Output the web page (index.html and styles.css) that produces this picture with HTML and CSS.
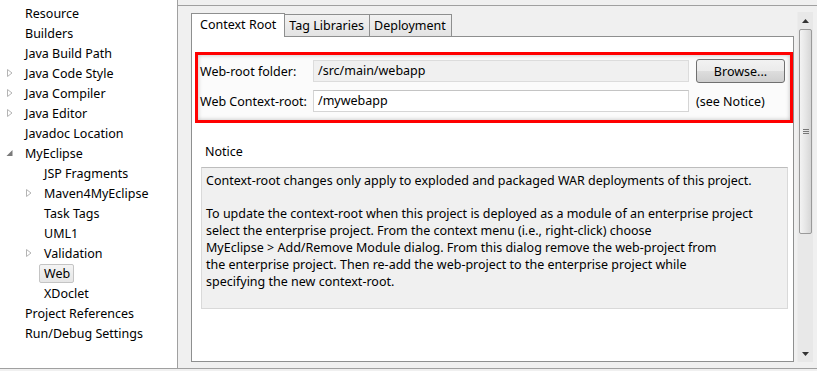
FILE: index.html
```html
<!DOCTYPE html>
<html lang="en">
<head>
  <meta charset="UTF-8" />
  <title>Properties - Web</title>
  <link rel="stylesheet" href="styles.css">
</head>
<body>
  <div class="window">
    <ul class="tree">
      <li class="row"><span class="twisty"></span><span class="label">Resource</span></li>
      <li class="row"><span class="twisty"></span><span class="label">Builders</span></li>
      <li class="row"><span class="twisty"></span><span class="label">Java Build Path</span></li>
      <li class="row"><span class="twisty"><svg width="8" height="10" viewBox="0 0 8 10"><path d="M1.5 1.5 L6 5 L1.5 8.5 Z" fill="#fff" stroke="#b4b4b4"/></svg></span><span class="label">Java Code Style</span></li>
      <li class="row"><span class="twisty"><svg width="8" height="10" viewBox="0 0 8 10"><path d="M1.5 1.5 L6 5 L1.5 8.5 Z" fill="#fff" stroke="#b4b4b4"/></svg></span><span class="label">Java Compiler</span></li>
      <li class="row"><span class="twisty"><svg width="8" height="10" viewBox="0 0 8 10"><path d="M1.5 1.5 L6 5 L1.5 8.5 Z" fill="#fff" stroke="#b4b4b4"/></svg></span><span class="label">Java Editor</span></li>
      <li class="row"><span class="twisty"></span><span class="label">Javadoc Location</span></li>
      <li class="row"><span class="twisty"><svg width="8" height="10" viewBox="0 0 8 10"><path d="M6.5 2 L6.5 8 L0.5 8 Z" fill="#7a7a7a"/></svg></span><span class="label">MyEclipse</span></li>
      <li class="row child"><span class="twisty"></span><span class="label">JSP Fragments</span></li>
      <li class="row child"><span class="twisty"><svg width="8" height="10" viewBox="0 0 8 10"><path d="M1.5 1.5 L6 5 L1.5 8.5 Z" fill="#fff" stroke="#b4b4b4"/></svg></span><span class="label">Maven4MyEclipse</span></li>
      <li class="row child"><span class="twisty"></span><span class="label">Task Tags</span></li>
      <li class="row child"><span class="twisty"></span><span class="label">UML1</span></li>
      <li class="row child"><span class="twisty"><svg width="8" height="10" viewBox="0 0 8 10"><path d="M1.5 1.5 L6 5 L1.5 8.5 Z" fill="#fff" stroke="#b4b4b4"/></svg></span><span class="label">Validation</span></li>
      <li class="row child"><span class="twisty"></span><span class="label selected">Web</span></li>
      <li class="row child"><span class="twisty"></span><span class="label">XDoclet</span></li>
      <li class="row"><span class="twisty"></span><span class="label">Project References</span></li>
      <li class="row"><span class="twisty"></span><span class="label">Run/Debug Settings</span></li>
    </ul>

    <div class="main">
      <div class="page">
        <div class="folder">
          <div class="tabs">
            <div class="tab active">Context Root</div>
            <div class="tab">Tag Libraries</div>
            <div class="tab">Deployment</div>
          </div>
          <div class="panel">
            <div class="highlight">
              <div class="form-grid">
                <label>Web-root folder:</label>
                <div class="field readonly">/src/main/webapp</div>
                <button type="button" class="btn">Browse...</button>
                <label>Web Context-root:</label>
                <div class="field">/mywebapp</div>
                <span class="hint">(see Notice)</span>
              </div>
            </div>

            <div class="notice-title">Notice</div>
            <div class="notice-box">
              <p>Context-root changes only apply to exploded and packaged WAR deployments of this project.</p>
              <p>To update the context-root when this project is deployed as a module of an enterprise project<br>
select the enterprise project. From the context menu (i.e., right-click) choose<br>
MyEclipse &gt; Add/Remove Module dialog. From this dialog remove the web-project from<br>
the enterprise project. Then re-add the web-project to the enterprise project while<br>
specifying the new context-root.</p>
            </div>
          </div>
        </div>

        <div class="scrollbar">
          <div class="arrow up"><svg width="7" height="4" viewBox="0 0 7 4"><path d="M3.5 0 L7 4 L0 4 Z" fill="#333"/></svg></div>
          <div class="thumb"><span class="grip"></span></div>
          <div class="track"></div>
          <div class="arrow down"><svg width="7" height="4" viewBox="0 0 7 4"><path d="M0 0 L7 0 L3.5 4 Z" fill="#333"/></svg></div>
        </div>
      </div>
    </div>
  </div>
</body>
</html>
```

FILE: styles.css
```css
* {
  margin: 0;
  padding: 0;
  box-sizing: border-box;
}
body {
  font-family: 'Noto Sans', 'Open Sans', sans-serif;
  font-size: 12.5px;
  color: #000;
  background: #f0f0f0;
}
.window {
  display: flex;
  height: 369px;
  border-bottom: 1px solid #a0a0a0;
}

/* left tree */
.tree {
  list-style: none;
  width: 178px;
  background: #fff;
  border-right: 1px solid #a0a0a0;
  padding-top: 3px;
}
.row {
  display: flex;
  align-items: center;
  height: 20px;
  padding-left: 6px;
  white-space: nowrap;
}
.row.child {
  padding-left: 25px;
}
.twisty {
  width: 19px;
  display: flex;
  align-items: center;
}
.label.selected {
  margin-left: -5px;
  padding: 0 3px 0 4px;
  line-height: 17px;
  border: 1px solid #c4c4c4;
  border-radius: 2px;
  background: linear-gradient(#f4f4f4, #e6e6e6);
}

/* right side */
.main {
  flex: 1;
  padding-top: 5px;
}
.page {
  display: flex;
  border-top: 1px solid #a0a0a0;
  padding: 6px 4px 0 13px;
  height: 357px;
}
.folder {
  width: 603px;
  display: flex;
  flex-direction: column;
}
.tabs {
  display: flex;
  align-items: flex-end;
  height: 24px;
}
.tab {
  height: 22px;
  padding: 0 5px 0 4px;
  line-height: 21px;
  background: linear-gradient(#f2f2f2, #e3e3e3);
  border: 1px solid #8e8f8f;
  border-bottom: none;
  margin-left: -1px;
  white-space: nowrap;
}
.tab.active {
  height: 24px;
  padding: 0 8px;
  line-height: 21px;
  background: #fff;
  margin-left: 0;
  position: relative;
  z-index: 1;
  margin-bottom: -1px;
}
.panel {
  flex: 1;
  background: #fff;
  border: 1px solid #8e8f8f;
  padding: 15px 0 0 3px;
}
.highlight {
  width: 598px;
  border: 3px solid #ff0000;
  box-shadow: inset 0 0 4px rgba(0,0,0,0.25);
  background: #fbfbfb;
}
.form-grid {
  display: grid;
  grid-template-columns: 106px 376px 89px;
  grid-template-rows: 24px 22px;
  column-gap: 7px;
  row-gap: 7px;
  align-items: center;
  padding: 4px 0 8px 2px;
  white-space: nowrap;
}
.field {
  height: 22px;
  line-height: 20px;
  padding: 0 4px;
  border: 1px solid #d5d5d5;
  border-top-color: #c4c4c4;
  background: #fff;
}
.field.readonly {
  background: #f0f0f0;
  border-color: #dcdcdc;
}
.btn {
  font: inherit;
  height: 24px;
  border: 1px solid #707070;
  border-radius: 3px;
  background: linear-gradient(#f2f2f2 0%, #ebebeb 50%, #dddddd 51%, #cfcfcf 100%);
  color: #000;
}
.notice-title {
  margin: 21px 0 7px 10px;
  line-height: 16px;
}
.notice-box {
  width: 587px;
  height: 142px;
  margin-left: 6px;
  padding: 4px 0 0 4px;
  background: #f0f0f0;
  border: 1px solid #d9d9d9;
  border-top-color: #bdbdbd;
  line-height: 17px;
  white-space: nowrap;
}
.notice-box p {
  margin-bottom: 16px;
}

/* scrollbar */
.scrollbar {
  width: 16px;
  margin-left: 3px;
  display: flex;
  flex-direction: column;
  background: #e8e8e8;
  border-left: 1px solid #ececec;
}
.arrow {
  height: 17px;
  display: flex;
  align-items: center;
  justify-content: center;
}
.thumb {
  height: 205px;
  margin: 0 1px;
  border: 1px solid #9a9a9a;
  border-radius: 2px;
  background: linear-gradient(90deg, #f3f3f3, #e6e6e6 50%, #d6d6d6);
  display: flex;
  align-items: center;
  justify-content: center;
}
.grip {
  width: 6px;
  height: 5px;
  border-top: 1px solid #777;
  border-bottom: 1px solid #777;
  position: relative;
}
.grip::after {
  content: '';
  position: absolute;
  left: 0;
  right: 0;
  top: 1px;
  border-top: 1px solid #777;
}
.track {
  flex: 1;
}
```
